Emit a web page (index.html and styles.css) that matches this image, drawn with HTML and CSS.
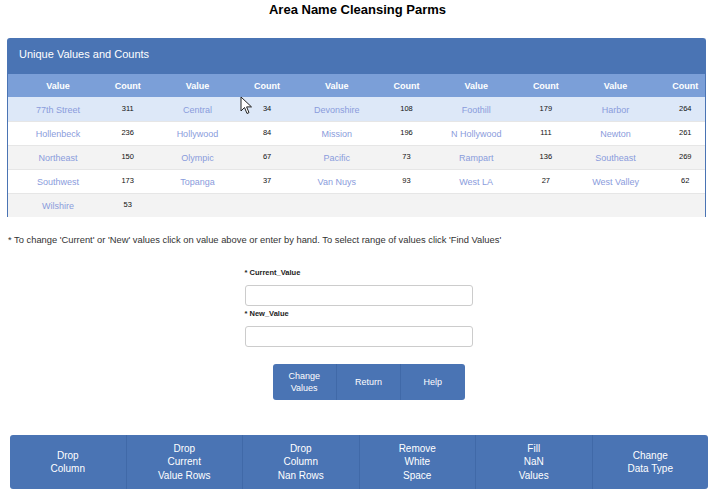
FILE: index.html
```html
<!DOCTYPE html>
<html>
<head>
<meta charset="utf-8">
<link rel="stylesheet" href="styles.css">
</head>
<body>
<h1 class="title">Area Name Cleansing Parms</h1>
<div class="panel">
  <div class="panel-head">Unique Values and Counts</div>
  <table class="vals">
    <colgroup>
      <col class="cv"><col class="cc"><col class="cv"><col class="cc"><col class="cv"><col class="cc"><col class="cv"><col class="cc"><col class="cv"><col class="cc">
    </colgroup>
    <thead>
      <tr><th>Value</th><th>Count</th><th>Value</th><th>Count</th><th>Value</th><th>Count</th><th>Value</th><th>Count</th><th>Value</th><th>Count</th></tr>
    </thead>
    <tbody>
      <tr class="hl"><td class="v">77th Street</td><td class="c">311</td><td class="v">Central</td><td class="c">34</td><td class="v">Devonshire</td><td class="c">108</td><td class="v">Foothill</td><td class="c">179</td><td class="v">Harbor</td><td class="c">264</td></tr>
      <tr><td class="v">Hollenbeck</td><td class="c">236</td><td class="v">Hollywood</td><td class="c">84</td><td class="v">Mission</td><td class="c">196</td><td class="v">N Hollywood</td><td class="c">111</td><td class="v">Newton</td><td class="c">261</td></tr>
      <tr class="alt"><td class="v">Northeast</td><td class="c">150</td><td class="v">Olympic</td><td class="c">67</td><td class="v">Pacific</td><td class="c">73</td><td class="v">Rampart</td><td class="c">136</td><td class="v">Southeast</td><td class="c">269</td></tr>
      <tr><td class="v">Southwest</td><td class="c">173</td><td class="v">Topanga</td><td class="c">37</td><td class="v">Van Nuys</td><td class="c">93</td><td class="v">West LA</td><td class="c">27</td><td class="v">West Valley</td><td class="c">62</td></tr>
      <tr class="alt"><td class="v">Wilshire</td><td class="c">53</td><td></td><td></td><td></td><td></td><td></td><td></td><td></td><td></td></tr>
    </tbody>
  </table>
</div>
<p class="note">* To change 'Current' or 'New' values click on value above or enter by hand. To select range of values click 'Find Values'</p>
<div class="form">
  <label class="lbl">* Current_Value</label>
  <input class="inp" type="text">
  <label class="lbl">* New_Value</label>
  <input class="inp" type="text">
  <div class="btn-group">
    <div class="btn">Change<br>Values</div>
    <div class="btn">Return</div>
    <div class="btn">Help</div>
  </div>
</div>
<div class="bar">
  <div class="bbtn">Drop<br>Column</div>
  <div class="bbtn">Drop<br>Current<br>Value Rows</div>
  <div class="bbtn">Drop<br>Column<br>Nan Rows</div>
  <div class="bbtn">Remove<br>White<br>Space</div>
  <div class="bbtn">Fill<br>NaN<br>Values</div>
  <div class="bbtn">Change<br>Data Type</div>
</div>
<svg class="cursor" width="13" height="20" viewBox="0 0 13 20"><path d="M1 1 L1 15 L4.5 11.5 L7 17.5 L9 16.6 L6.6 10.9 L11.5 10.9 Z" fill="#fff" stroke="#222" stroke-width="1"/></svg>
</body>
</html>
```
FILE: styles.css
```css
* { box-sizing: border-box; }
body {
  margin: 0;
  width: 715px;
  height: 494px;
  font-family: "Liberation Sans", Arial, sans-serif;
  background: #fff;
  color: #222;
  position: relative;
  overflow: hidden;
}
.title {
  margin: 0;
  padding-top: 2px;
  height: 18px;
  line-height: 16px;
  font-size: 13px;
  font-weight: bold;
  text-align: center;
  color: #000;
}
.panel {
  margin: 20px 9px 0 7px;
  border: 1px solid #4a74b4;
  border-bottom: none;
  border-radius: 3px 3px 0 0;
  background: #f3f3f3;
}
.panel-head {
  height: 35px;
  background: #4a74b4;
  color: #fff;
  font-size: 11px;
  line-height: 14px;
  padding: 8px 0 0 11px;
}
.vals {
  width: 100%;
  border-collapse: collapse;
  table-layout: fixed;
}
.cv { width: 14.35%; }
.cc { width: 5.65%; }
.vals th {
  height: 23px;
  background: #7b9fd8;
  color: #fff;
  font-size: 9px;
  font-weight: bold;
  text-align: center;
  padding: 0;
}
.vals td {
  height: 24px;
  text-align: center;
  padding: 2px 0 0 0;
  border-top: 1px solid #e6e6e6;
  background: #fff;
}
.vals tr.alt td { background: #f3f3f3; }
.vals tr.hl td { background: #dde8f8; border-top: none; padding-top: 2px; }
.vals td.v {
  font-size: 9px;
  color: #8a9cdc;
}
.vals td.c {
  font-size: 7.5px;
  color: #111;
  vertical-align: middle;
  padding: 0 0 2px 0;
}
.note {
  margin: 17px 0 0 8px;
  font-size: 9.35px;
  line-height: 12px;
  color: #333;
}
.form {
  width: 228px;
  margin: 22px auto 0 auto;
  position: relative;
  left: 1px;
  display: flex;
  flex-direction: column;
}
.lbl {
  font-size: 7.5px;
  font-weight: bold;
  color: #222;
  line-height: 10px;
  height: 10px;
}
.inp {
  margin: 7px 0 3px 0;
  height: 21px;
  border: 1px solid #ccc;
  border-radius: 3px;
  background: #fff;
  padding: 0;
}
.btn-group {
  margin: 14px 0 0 28px;
  width: 192px;
  height: 36px;
  display: flex;
  background: #4a74b4;
  border-radius: 3px;
  overflow: hidden;
}
.btn {
  flex: 1;
  display: flex;
  align-items: center;
  justify-content: center;
  text-align: center;
  color: #fff;
  font-size: 9px;
  line-height: 12px;
  border-left: 1px solid #4069a8;
}
.btn:first-child { border-left: none; }
.bar {
  position: absolute;
  left: 10px;
  top: 435px;
  width: 698px;
  height: 54px;
  display: flex;
  background: #4a74b4;
  border-radius: 3px;
  overflow: hidden;
}
.bbtn {
  flex: 1;
  display: flex;
  align-items: center;
  justify-content: center;
  text-align: center;
  color: #fff;
  font-size: 10px;
  line-height: 13.5px;
  border-left: 1px solid #4069a8;
}
.bbtn:first-child { border-left: none; }
.cursor {
  position: absolute;
  left: 240px;
  top: 96px;
}
```
